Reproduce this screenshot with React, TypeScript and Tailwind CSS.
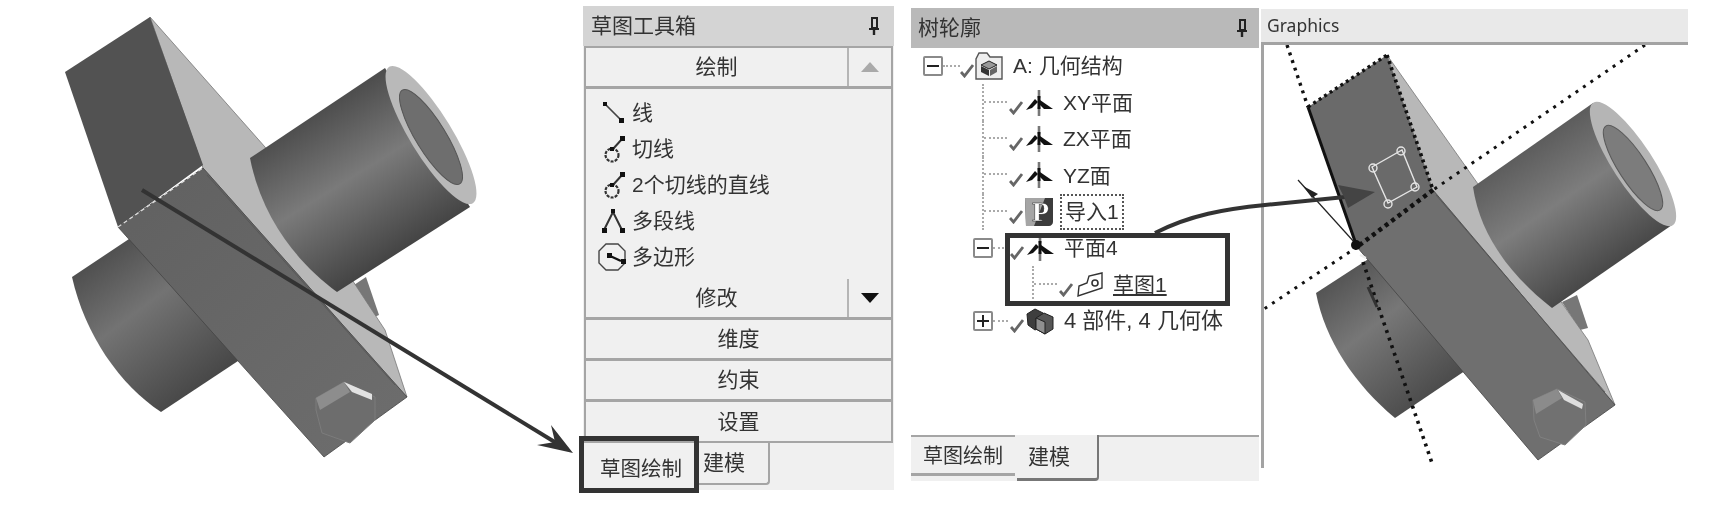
import React from 'react';

const CJK = "font-['Liberation_Sans','Noto_Sans_CJK_SC',sans-serif]";

function Pin() {
  return (
    <svg width="12" height="20" viewBox="0 0 12 20" fill="none">
      <path d="M4 2h5v10H4z" stroke="#222" strokeWidth="2" />
      <path d="M1 13h10" stroke="#222" strokeWidth="2" />
      <path d="M6 13v6" stroke="#222" strokeWidth="2.4" />
    </svg>
  );
}

function Check() {
  return (
    <svg width="14" height="14" viewBox="0 0 14 14" fill="none" className="shrink-0 mt-[10px]">
      <path d="M1 8l3.5 4L13 1" stroke="#666" strokeWidth="2.8" />
    </svg>
  );
}

function PlaneIcon() {
  return (
    <svg width="28" height="28" viewBox="0 0 28 28" className="shrink-0">
      <path d="M14 1v8M14 18v9" stroke="#777" strokeWidth="2.6" />
      <path d="M14 7v13" stroke="#111" strokeWidth="3" />
      <path d="M1 21L10 10l3 3-6 6z" fill="#111" />
      <path d="M28 20L15 11l-1 4 5 5z" fill="#111" />
    </svg>
  );
}

function PartIcon() {
  return (
    <svg width="28" height="28" viewBox="0 0 28 28" className="shrink-0">
      <path d="M1 7l8-5 8 4v13l-8 4-7-5z" fill="#3e3e3e" stroke="#222" />
      <path d="M10 11l8-5 9 4v12l-8 5-9-5z" fill="#555" stroke="#222" />
      <path d="M10 11l9 4v12l-9-5z" fill="#8f8f8f" stroke="#222" />
    </svg>
  );
}

function ImportIcon() {
  return (
    <svg width="28" height="29" viewBox="0 0 28 29" className="shrink-0">
      <path d="M0 1h28v24c0 2-2 4-4 4H1z" fill="#3c3c3c" />
      <path d="M0 1h20L9 29H1z" fill="#a5a5a5" />
      <text x="7" y="24" fontSize="28" fontWeight="700" fontFamily="Liberation Serif, serif" fill="#fff" stroke="#222" strokeWidth="0.5">P</text>
    </svg>
  );
}

function SketchIcon() {
  return (
    <svg width="26" height="26" viewBox="0 0 26 26" fill="none" className="shrink-0">
      <path d="M1 24l1-10 8-3 2-7 13-3v15z" fill="#fff" stroke="#333" strokeWidth="1.4" />
      <circle cx="18" cy="11" r="3" stroke="#333" strokeWidth="1.6" />
    </svg>
  );
}

function ExpandBox({ open }: { open: boolean }) {
  return (
    <span className="w-[20px] h-[20px] shrink-0 border-2 border-[#8a8a8a] rounded-[2px] bg-white flex items-center justify-center relative">
      <span className="w-[12px] h-[2px] bg-[#222]" />
      {!open && <span className="w-[2px] h-[12px] bg-[#222] absolute" />}
    </span>
  );
}

function Dots({ w }: { w: string }) {
  return <span className={`${w} h-0 shrink-0 border-t-2 border-dotted border-[#aaa]`} />;
}

function Guide() {
  return (
    <span className="w-[25px] self-stretch shrink-0 border-l-2 border-dotted border-[#aaa]">
      <span className="block h-1/2 border-b-2 border-dotted border-[#aaa]" />
    </span>
  );
}

function PlaneRow({ label }: { label: string }) {
  return (
    <div className="flex items-center h-[36.4px] pl-[71px]">
      <Guide />
      <span className="ml-[2px] flex items-center gap-[2px]"><Check /><PlaneIcon /></span>
      <span className="ml-[10px] text-[21px]">{label}</span>
    </div>
  );
}

function ToolRow({ icon, label }: { icon: React.ReactNode; label: string }) {
  return (
    <div className="flex items-center h-[36px] pl-[15px]">
      <span className="w-[31px] h-[30px] flex items-center shrink-0">{icon}</span>
      <span className="text-[21px]">{label}</span>
    </div>
  );
}

function FullButton({ label }: { label: string }) {
  return (
    <div className="h-[41px] flex items-center justify-center text-[21px] border-b-[3px] border-[#a5a5a5] bg-[#f0f0f0]">{label}</div>
  );
}

function SplitButton({ label, up }: { label: string; up: boolean }) {
  return (
    <div className="flex h-[41px] shrink-0 border-b-[3px] border-[#a5a5a5]">
      <div className="w-[263px] flex items-center justify-center text-[21px] border-r-2 border-[#b5b5b5]">{label}</div>
      <div className="flex-1 flex items-center justify-center">
        <svg width="18" height="10" viewBox="0 0 18 10">
          {up ? <path d="M9 0l9 10H0z" fill="#aaa" /> : <path d="M0 0h18L9 10z" fill="#111" />}
        </svg>
      </div>
    </div>
  );
}

function Tangent() {
  return (
    <svg width="26" height="30" viewBox="0 0 26 30" fill="none">
      <circle cx="11" cy="21" r="6.5" stroke="#333" strokeWidth="2.2" strokeDasharray="3 1.2" />
      <path d="M12 15L21 5" stroke="#333" strokeWidth="2" />
      <rect x="19" y="2" width="5" height="5" fill="#111" />
      <rect x="9" y="13" width="4" height="4" fill="#111" />
    </svg>
  );
}

function Model1() {
  return (
    <svg width="583" height="509" viewBox="0 0 583 509" className="shrink-0">
      <defs>
        <linearGradient id="m1a" gradientUnits="userSpaceOnUse" x1="318" y1="113" x2="403" y2="250">
          <stop offset="0" stopColor="#4e4e4e" /><stop offset="0.45" stopColor="#7a7a7a" /><stop offset="1" stopColor="#444" />
        </linearGradient>
        <linearGradient id="m1b" gradientUnits="userSpaceOnUse" x1="100" y1="258" x2="198" y2="388">
          <stop offset="0" stopColor="#505050" /><stop offset="0.4" stopColor="#737373" /><stop offset="1" stopColor="#484848" />
        </linearGradient>
        <linearGradient id="m1c" gradientUnits="userSpaceOnUse" x1="160" y1="200" x2="370" y2="430">
          <stop offset="0" stopColor="#626262" /><stop offset="1" stopColor="#6c6c6c" />
        </linearGradient>
      </defs>
      <path d="M351 287L366 277 379 315 372 318z" fill="#777" />
      <path d="M72 277L156 221 265 343 161 412C120 385 85 335 72 277z" fill="url(#m1b)" />
      <path d="M150 17L265 147 385 330 407 397 203 168z" fill="#b8b8b8" stroke="#777" strokeWidth="0.8" />
      <path d="M118 227L203 168 407 397 324 457z" fill="url(#m1c)" stroke="#444" strokeWidth="0.8" />
      <path d="M65 72L150 17 203 165 118 227z" fill="#525252" />
      <path d="M118 227L203 168" stroke="#ddd" strokeWidth="1.2" strokeDasharray="4 3" />
      <path d="M207 175L395 385" stroke="#555" strokeWidth="0.8" />
      <path d="M250 158L385 68 470 207 337 292C300 265 262 220 250 158z" fill="url(#m1a)" />
      <ellipse cx="431" cy="135" rx="80" ry="21" transform="rotate(58.5 431 135)" fill="#b9b9b9" />
      <ellipse cx="431" cy="137" rx="55" ry="15" transform="rotate(58.5 431 137)" fill="#6e6e6e" stroke="#555" />
      <path d="M316 398L344 382 375 397 375 420 350 443 322 433 316 410z" fill="#6d6d6d" stroke="#7c7c7c" />
      <path d="M316 398L344 382 350 392 320 410z" fill="#8d8d8d" />
      <path d="M344 382L372 394 372 400 352 392z" fill="#e2e2e2" />
    </svg>
  );
}

function Model2() {
  return (
    <svg width="424" height="423" viewBox="1264 45 424 423" className="block">
      <defs>
        <linearGradient id="m2a" gradientUnits="userSpaceOnUse" x1="1530" y1="140" x2="1615" y2="265">
          <stop offset="0" stopColor="#5a5a5a" /><stop offset="0.45" stopColor="#7d7d7d" /><stop offset="1" stopColor="#484848" />
        </linearGradient>
        <linearGradient id="m2b" gradientUnits="userSpaceOnUse" x1="1338" y1="278" x2="1430" y2="396">
          <stop offset="0" stopColor="#555" /><stop offset="0.4" stopColor="#777" /><stop offset="1" stopColor="#4c4c4c" />
        </linearGradient>
      </defs>
      <path d="M1562 302L1577 295 1588 328 1580 330z" fill="#777" />
      <path d="M1316 293L1390 245 1490 354 1395 418C1355 385 1325 340 1316 293z" fill="url(#m2b)" />
      <path d="M1387 55L1588 340 1615 405 1433 195z" fill="#b8b8b8" stroke="#777" strokeWidth="0.8" />
      <path d="M1357 247L1433 190 1615 405 1538 460z" fill="#6f6f6f" stroke="#444" strokeWidth="0.8" />
      <path d="M1308 107L1387 55 1433 190 1357 247z" fill="#6a6a6a" />
      <path d="M1436 195L1605 392" stroke="#555" strokeWidth="0.8" />
      <path d="M1473 187L1593 103 1672 225 1552 308C1510 275 1480 235 1473 187z" fill="url(#m2a)" />
      <ellipse cx="1633" cy="164" rx="73" ry="20" transform="rotate(57 1633 164)" fill="#b5b5b5" />
      <ellipse cx="1633" cy="168" rx="50" ry="14" transform="rotate(57 1633 168)" fill="#7c7c7c" stroke="#5a5a5a" />
      <path d="M1533 400L1557 389 1585 402 1586 425 1565 445 1540 437 1534 420z" fill="#717171" stroke="#808080" />
      <path d="M1533 400L1557 389 1562 398 1536 414z" fill="#8b8b8b" />
      <path d="M1558 390L1583 404 1582 409 1564 400z" fill="#dedede" />
      <path d="M1372 167L1402 150 1417 187 1388 203z" fill="none" stroke="#e5e5e5" strokeWidth="1.4" />
      <g fill="none" stroke="#e5e5e5" strokeWidth="1.4">
        <circle cx="1373" cy="168" r="4" /><circle cx="1401" cy="151" r="4" /><circle cx="1415" cy="187" r="4" /><circle cx="1388" cy="204" r="4" />
      </g>
      <g fill="none" stroke="#111">
        <path d="M1287 45L1308 107" strokeWidth="3.4" strokeDasharray="3 5" />
        <path d="M1308 107L1387 55" strokeWidth="3.4" strokeDasharray="3 3.5" />
        <path d="M1387 55L1433 190" strokeWidth="3.6" strokeDasharray="3 3.5" />
        <path d="M1433 190L1357 247" strokeWidth="4.5" strokeDasharray="4 4" />
        <path d="M1645 45L1433 190" strokeWidth="3" strokeDasharray="3 6" />
        <path d="M1357 247L1264 309" strokeWidth="3" strokeDasharray="3 6" />
        <path d="M1363 262L1432 463" strokeWidth="3.6" strokeDasharray="3 5" />
      </g>
      <path d="M1308 107L1357 247" stroke="#111" strokeWidth="3" />
      <path d="M1298 180L1355 243" stroke="#222" strokeWidth="1.2" />
      <path d="M1303 186L1318 194 1312 198z" fill="#222" />
      <circle cx="1356" cy="245" r="5" fill="#111" />
      <path d="M1360 255l6 3" stroke="#eee" strokeWidth="2" />
      <path d="M1368 287L1377 307" stroke="#333" strokeWidth="3" />
    </svg>
  );
}

export default function App() {
  return (
    <div className={`relative flex w-[1722px] h-[509px] overflow-hidden bg-white text-[#333] blur-[0.5px] ${CJK}`}>
      <Model1 />

      {/* sketch toolbox */}
      <div className="mt-[6px] w-[311px] h-[484px] shrink-0 flex flex-col bg-[#f0f0f0]">
        <div className="h-[40px] flex items-center justify-between pl-[8px] pr-[14px] bg-[#d4d4d4] text-[21px] shrink-0">
          <span>草图工具箱</span>
          <Pin />
        </div>
        <div className="mx-[1px] h-[397px] border-2 border-[#a5a5a5] flex flex-col shrink-0">
          <SplitButton label="绘制" up />
          <div className="h-[190px] pt-[6px] shrink-0">
            <ToolRow label="线" icon={
              <svg width="26" height="26" viewBox="0 0 26 26" fill="none">
                <path d="M4 4L20 20" stroke="#444" strokeWidth="1.7" />
                <rect x="2" y="2" width="4" height="4" fill="#111" /><rect x="18" y="18" width="5" height="5" fill="#111" />
              </svg>
            } />
            <ToolRow label="切线" icon={<Tangent />} />
            <ToolRow label="2个切线的直线" icon={<Tangent />} />
            <ToolRow label="多段线" icon={
              <svg width="26" height="26" viewBox="0 0 26 26" fill="none">
                <path d="M3 22L12 4l9 18" stroke="#333" strokeWidth="2" />
                <rect x="10" y="1" width="4" height="4" fill="#111" /><rect x="1" y="20" width="5" height="5" fill="#111" /><rect x="19" y="20" width="5" height="5" fill="#111" />
              </svg>
            } />
            <ToolRow label="多边形" icon={
              <svg width="30" height="30" viewBox="0 0 30 30" fill="none" className="-ml-[4px]">
                <path d="M9 2h12l7 7v12l-7 7H9l-7-7V9z" stroke="#444" strokeWidth="1.4" />
                <path d="M11 13l13 6" stroke="#111" strokeWidth="2.4" />
                <rect x="10" y="11" width="5" height="5" fill="#111" /><rect x="24" y="17" width="5" height="5" fill="#111" />
              </svg>
            } />
          </div>
          <SplitButton label="修改" up={false} />
          <FullButton label="维度" />
          <FullButton label="约束" />
          <div className="flex-1 flex items-center justify-center text-[21px]">设置</div>
        </div>
        <div className="flex flex-1">
          <div className="w-[116px] flex items-center justify-center text-[20.5px] pt-[6px]">草图绘制</div>
          <div className="w-[71px] h-[42px] flex items-center pl-[4px] text-[21px] border-r-2 border-b-2 border-[#a5a5a5] rounded-br-[4px]">建模</div>
        </div>
      </div>

      {/* tree outline */}
      <div className="ml-[17px] mt-[8px] w-[348px] h-[473px] shrink-0 flex flex-col">
        <div className="h-[40px] flex items-center justify-between pl-[7px] pr-[11px] bg-[#b9b9b9] text-[21px] shrink-0">
          <span>树轮廓</span>
          <Pin />
        </div>
        <div className="flex-1">
          <div className="flex items-center h-[36.4px] pl-[12px]">
            <ExpandBox open />
            <Dots w="w-[17px]" />
            <Check />
            <svg width="28" height="30" viewBox="0 0 28 30" className="shrink-0 ml-[1px]">
              <path d="M1 8V28H27V6H15L12 2H4z" fill="#eee" stroke="#555" strokeWidth="1.4" />
              <path d="M6 14l8-4 8 4-8 4z" fill="#999" stroke="#222" />
              <path d="M6 15l8 4v6l-8-4z" fill="#333" /><path d="M22 15l-7 4v6l7-4z" fill="#666" />
            </svg>
            <span className="ml-[10px] text-[21px]">A: 几何结构</span>
          </div>
          <PlaneRow label="XY平面" />
          <PlaneRow label="ZX平面" />
          <PlaneRow label="YZ面" />
          <div className="flex items-center h-[36.4px] pl-[71px]">
            <Guide />
            <span className="ml-[2px] flex items-center gap-[2px]"><Check /><ImportIcon /></span>
            <span className="ml-[7px] h-[36px] px-[3px] flex items-center text-[21px] border-2 border-dotted border-[#555]">导入1</span>
          </div>
          <div className="flex items-center h-[36.4px] pl-[62px]">
            <ExpandBox open={true} />
            <Dots w="w-[15px]" />
            <span className="ml-[2px] flex items-center gap-[2px]"><Check /><PlaneIcon /></span>
            <span className="ml-[10px] text-[21px]">平面4</span>
          </div>
          <div className="flex items-center h-[36.4px] pl-[121px]">
            <Guide />
            <span className="ml-[2px] flex items-center gap-[4px]"><Check /><SketchIcon /></span>
            <span className="ml-[10px] text-[21px] underline underline-offset-2">草图1</span>
          </div>
          <div className="flex items-center h-[36.4px] pl-[62px]">
            <ExpandBox open={false} />
            <Dots w="w-[15px]" />
            <span className="ml-[2px] flex items-center gap-[2px]"><Check /><PartIcon /></span>
            <span className="ml-[10px] text-[22px] whitespace-nowrap">4 部件, 4 几何体</span>
          </div>
        </div>
        <div className="h-[46px] shrink-0 flex bg-[#f0f0f0]">
          <div className="w-[104px] h-[41px] flex items-center justify-center text-[20px] pt-[2px] border-t-2 border-b-[3px] border-[#a5a5a5]">草图绘制</div>
          <div className="w-[82px] h-[46px] ml-[2px] flex items-center pl-[11px] text-[21px] border-r-2 border-b-[3px] border-[#777] rounded-br-[4px]">建模</div>
          <div className="flex-1 border-t-2 border-[#a5a5a5]" />
        </div>
      </div>

      {/* graphics view */}
      <div className="ml-[2px] mt-[9px] w-[427px] h-[459px] shrink-0 flex flex-col">
        <div className="h-[36px] shrink-0 flex items-center pl-[6px] bg-[#e9e9e9] border-b-[3px] border-[#a3a3a3] text-[17.5px] font-['Noto_Sans',sans-serif]">Graphics</div>
        <div className="flex-1 border-l-[3px] border-[#a3a3a3]">
          <Model2 />
        </div>
      </div>

      {/* callouts over the figure */}
      <div className="absolute left-[579px] top-[436px] w-[120px] h-[57px] border-[5px] border-[#333]" />
      <div className="absolute left-[1005px] top-[233px] w-[225px] h-[73px] border-[5px] border-[#333]" />
      <svg width="1722" height="509" viewBox="0 0 1722 509" fill="none" className="absolute left-0 top-0 pointer-events-none">
        <path d="M142 190L558 444" stroke="#333" strokeWidth="4" />
        <path d="M573 453L551 425 555 442 537 445z" fill="#333" />
        <path d="M1155 233C1190 215 1225 209 1265 205L1345 197" stroke="#333" strokeWidth="4" />
        <path d="M1375 192L1338 185 1344 197 1348 208z" fill="#444" />
      </svg>
    </div>
  );
}
